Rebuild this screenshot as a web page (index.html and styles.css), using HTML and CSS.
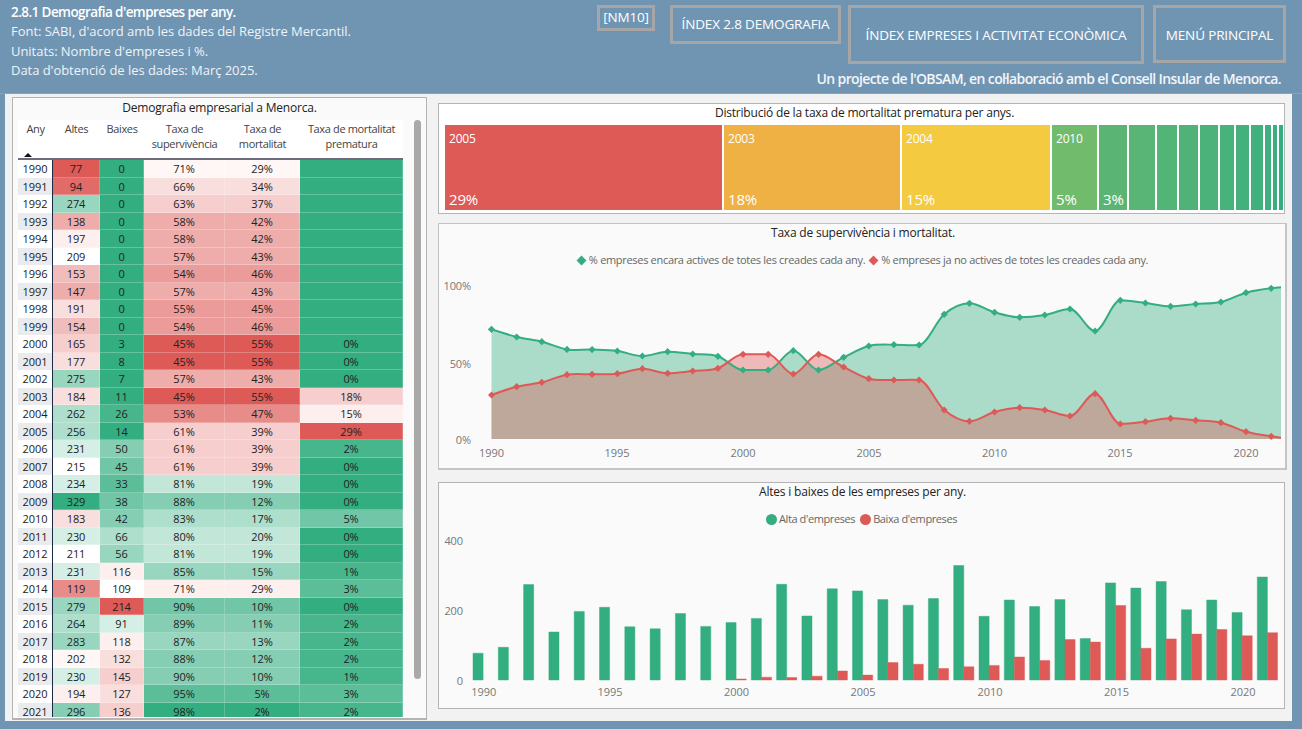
FILE: index.html
```html
<!DOCTYPE html>
<html lang="ca">
<head>
<meta charset="utf-8">
<title>Demografia d'empreses per any</title>
<link rel="stylesheet" href="styles.css">
</head>
<body>
<header class="top">
  <div class="intro">
    <h1 class="intro-title">2.8.1 Demografia d'empreses per any.</h1>
    <p class="intro-line">Font: SABI, d'acord amb les dades del Registre Mercantil.</p>
    <p class="intro-line">Unitats: Nombre d'empreses i %.</p>
    <p class="intro-line">Data d'obtenció de les dades: Març 2025.</p>
  </div>
  <div class="top-right">
    <nav class="nav">
      <a class="btn btn-nm">[NM10]</a>
      <a class="btn btn-index">ÍNDEX 2.8 DEMOGRAFIA</a>
      <a class="btn btn-emp">ÍNDEX EMPRESES I ACTIVITAT ECONÒMICA</a>
      <a class="btn btn-menu">MENÚ PRINCIPAL</a>
    </nav>
    <p class="credit">Un projecte de l'OBSAM, en col·laboració amb el Consell Insular de Menorca.</p>
  </div>
</header>
<main class="main">
  <section class="card card-table">
    <h2 class="table-title">Demografia empresarial a Menorca.</h2>
    <div class="table-wrap">
      <div class="tbl">
        <div class="th th-any">Any<span class="sort"></span></div><div class="th">Altes</div><div class="th">Baixes</div><div class="th">Taxa de<br>supervivència</div><div class="th">Taxa de<br>mortalitat</div><div class="th">Taxa de mortalitat<br>prematura</div>
        <div class="yr">1990</div><div class="c r10">77</div><div class="c g10">0</div><div class="c r0">71%</div><div class="c r0">29%</div><div class="c g10"></div>
        <div class="yr alt">1991</div><div class="c r9">94</div><div class="c g10">0</div><div class="c r2">66%</div><div class="c r2">34%</div><div class="c g10"></div>
        <div class="yr">1992</div><div class="c g5">274</div><div class="c g10">0</div><div class="c r3">63%</div><div class="c r3">37%</div><div class="c g10"></div>
        <div class="yr alt">1993</div><div class="c r5">138</div><div class="c g10">0</div><div class="c r5">58%</div><div class="c r5">42%</div><div class="c g10"></div>
        <div class="yr">1994</div><div class="c r1">197</div><div class="c g10">0</div><div class="c r5">58%</div><div class="c r5">42%</div><div class="c g10"></div>
        <div class="yr alt">1995</div><div class="c w">209</div><div class="c g10">0</div><div class="c r5">57%</div><div class="c r5">43%</div><div class="c g10"></div>
        <div class="yr">1996</div><div class="c r4">153</div><div class="c g10">0</div><div class="c r6">54%</div><div class="c r6">46%</div><div class="c g10"></div>
        <div class="yr alt">1997</div><div class="c r5">147</div><div class="c g10">0</div><div class="c r5">57%</div><div class="c r5">43%</div><div class="c g10"></div>
        <div class="yr">1998</div><div class="c r2">191</div><div class="c g10">0</div><div class="c r6">55%</div><div class="c r6">45%</div><div class="c g10"></div>
        <div class="yr alt">1999</div><div class="c r4">154</div><div class="c g10">0</div><div class="c r6">54%</div><div class="c r6">46%</div><div class="c g10"></div>
        <div class="yr">2000</div><div class="c r3">165</div><div class="c g10">3</div><div class="c r10">45%</div><div class="c r10">55%</div><div class="c g10">0%</div>
        <div class="yr alt">2001</div><div class="c r2">177</div><div class="c g10">8</div><div class="c r10">45%</div><div class="c r10">55%</div><div class="c g10">0%</div>
        <div class="yr">2002</div><div class="c g5">275</div><div class="c g10">7</div><div class="c r5">57%</div><div class="c r5">43%</div><div class="c g10">0%</div>
        <div class="yr alt">2003</div><div class="c r2">184</div><div class="c g10">11</div><div class="c r10">45%</div><div class="c r10">55%</div><div class="c r3">18%</div>
        <div class="yr">2004</div><div class="c g4">262</div><div class="c g9">26</div><div class="c r7">53%</div><div class="c r7">47%</div><div class="c r1">15%</div>
        <div class="yr alt">2005</div><div class="c g4">256</div><div class="c g10">14</div><div class="c r3">61%</div><div class="c r3">39%</div><div class="c r10">29%</div>
        <div class="yr">2006</div><div class="c g2">231</div><div class="c g6">50</div><div class="c r3">61%</div><div class="c r3">39%</div><div class="c g9">2%</div>
        <div class="yr alt">2007</div><div class="c w">215</div><div class="c g7">45</div><div class="c r3">61%</div><div class="c r3">39%</div><div class="c g10">0%</div>
        <div class="yr">2008</div><div class="c g2">234</div><div class="c g8">33</div><div class="c g3">81%</div><div class="c g3">19%</div><div class="c g10">0%</div>
        <div class="yr alt">2009</div><div class="c g10">329</div><div class="c g7">38</div><div class="c g6">88%</div><div class="c g6">12%</div><div class="c g10">0%</div>
        <div class="yr">2010</div><div class="c r2">183</div><div class="c g6">42</div><div class="c g4">83%</div><div class="c g4">17%</div><div class="c g7">5%</div>
        <div class="yr alt">2011</div><div class="c g2">230</div><div class="c g4">66</div><div class="c g3">80%</div><div class="c g3">20%</div><div class="c g10">0%</div>
        <div class="yr">2012</div><div class="c w">211</div><div class="c g5">56</div><div class="c g3">81%</div><div class="c g3">19%</div><div class="c g10">0%</div>
        <div class="yr alt">2013</div><div class="c g2">231</div><div class="c r1">116</div><div class="c g5">85%</div><div class="c g5">15%</div><div class="c g9">1%</div>
        <div class="yr">2014</div><div class="c r7">119</div><div class="c w">109</div><div class="c r1">71%</div><div class="c r1">29%</div><div class="c g8">3%</div>
        <div class="yr alt">2015</div><div class="c g5">279</div><div class="c r10">214</div><div class="c g7">90%</div><div class="c g7">10%</div><div class="c g10">0%</div>
        <div class="yr">2016</div><div class="c g4">264</div><div class="c g2">91</div><div class="c g6">89%</div><div class="c g6">11%</div><div class="c g9">2%</div>
        <div class="yr alt">2017</div><div class="c g5">283</div><div class="c r1">118</div><div class="c g5">87%</div><div class="c g5">13%</div><div class="c g9">2%</div>
        <div class="yr">2018</div><div class="c r0">202</div><div class="c r2">132</div><div class="c g6">88%</div><div class="c g6">12%</div><div class="c g9">2%</div>
        <div class="yr alt">2019</div><div class="c g2">230</div><div class="c r3">145</div><div class="c g6">90%</div><div class="c g6">10%</div><div class="c g9">1%</div>
        <div class="yr">2020</div><div class="c r1">194</div><div class="c r2">127</div><div class="c g8">95%</div><div class="c g8">5%</div><div class="c g8">3%</div>
        <div class="yr alt">2021</div><div class="c g6">296</div><div class="c r3">136</div><div class="c g10">98%</div><div class="c g10">2%</div><div class="c g9">2%</div>
      </div>
      <div class="scroll"></div>
    </div>
  </section>
  <div class="charts">
    <section class="card card-tree">
      <h2 class="chart-title chart-title-tree">Distribució de la taxa de mortalitat prematura per anys.</h2>
      <div class="tree">
        <div class="leaf" style="width:277px;background:#dd5a57"><span class="leaf-y">2005</span><span class="leaf-p">29%</span></div>
        <div class="leaf" style="width:176px;background:#efb044"><span class="leaf-y">2003</span><span class="leaf-p">18%</span></div>
        <div class="leaf" style="width:148px;background:#f4ca41"><span class="leaf-y">2004</span><span class="leaf-p">15%</span></div>
        <div class="leaf" style="width:45px;background:#71bb6c"><span class="leaf-y">2010</span><span class="leaf-p">5%</span></div>
        <div class="leaf" style="width:28px;background:#5ab574"><span class="leaf-y"></span><span class="leaf-p">3%</span></div>
        <div class="leaf" style="width:26px;background:#58b575"></div>
        <div class="leaf" style="width:20px;background:#52b477"></div>
        <div class="leaf" style="width:19px;background:#4fb378"></div>
        <div class="leaf" style="width:18px;background:#4bb27a"></div>
        <div class="leaf" style="width:14px;background:#48b27b"></div>
        <div class="leaf" style="width:13px;background:#44b17c"></div>
        <div class="leaf" style="width:12px;background:#40b07d"></div>
        <div class="leaf" style="width:6px;background:#3cb07e"></div>
        <div class="leaf" style="width:4px;background:#38af7f"></div>
        <div class="leaf" style="width:3px;background:#33ae80"></div>
      </div>
    </section>
    <section class="card card-line">
      <h2 class="chart-title">Taxa de supervivència i mortalitat.</h2>
      <div class="legend legend-line">
        <span class="key"><i class="mark diamond green"></i>% empreses encara actives de totes les creades cada any.</span>
        <span class="key"><i class="mark diamond red"></i>% empreses ja no actives de totes les creades cada any.</span>
      </div>
      <svg class="plot" viewBox="439 270 847 199" width="847" height="199">
        <defs>
          <marker id="mg" markerUnits="userSpaceOnUse" markerWidth="8" markerHeight="8" refX="4" refY="4"><path d="M4 .4 7.6 4 4 7.6 .4 4z" fill="#33ae80"/></marker>
          <marker id="mr" markerUnits="userSpaceOnUse" markerWidth="8" markerHeight="8" refX="4" refY="4"><path d="M4 .4 7.6 4 4 7.6 .4 4z" fill="#dd5a57"/></marker>
        </defs>
        <path class="area-g" d="M491.5 329.3S508.3 334.9 516.7 337S533.4 339.6 541.8 341.7S558.6 348.1 567 349.4S583.7 349.3 592.1 349.6S608.9 349.9 617.3 351S634 356 642.4 356S659.2 351.7 667.6 351.7S684.3 353.2 692.7 354S709.5 353.6 717.9 356.3S734.6 370 743 370S759.8 370 768.2 370S784.9 350.7 793.3 350.7S810.1 370 818.5 370S835.2 361.3 843.6 357.3S860.4 348.1 868.8 346S885.5 344.7 893.9 344.7S910.7 345.5 919.1 345S935.8 321.3 944.2 314.3S961 303.3 969.4 303.3S986.1 310 994.5 312.3S1011.3 317.3 1019.7 317.3S1036.4 316.4 1044.8 315S1061.6 309 1070 309S1086.7 331 1095.1 331S1111.9 300.3 1120.3 300.3S1137 302 1145.4 303S1162.2 306.3 1170.6 306.3S1187.3 304.7 1195.7 304S1212.5 303.9 1220.9 302S1237.6 295 1246 292.7S1262.8 289.2 1271.2 288.3L1281 287.3V439H491.5Z"/>
        <path class="area-r" d="M491.5 395S508.3 388.8 516.7 386.7S533.4 384.3 541.8 382.3S558.6 376 567 374.7S583.7 374.5 592.1 374.3S608.9 374.6 617.3 373.7S634 368.7 642.4 368.7S659.2 373.3 667.6 373.3S684.3 371.8 692.7 371S709.5 371.1 717.9 368.3S734.6 354.3 743 354.3S759.8 354.3 768.2 354.3S784.9 374 793.3 374S810.1 354.3 818.5 354.3S835.2 363 843.6 367S860.4 376.5 868.8 378.7S885.5 379.9 893.9 380S910.7 379.5 919.1 380S935.8 403.1 944.2 410S961 421.3 969.4 421.3S986.1 414.3 994.5 412S1011.3 407.7 1019.7 407.7S1036.4 408.6 1044.8 410S1061.6 416 1070 416S1086.7 393.7 1095.1 393.7S1111.9 424 1120.3 424S1137 422.7 1145.4 421.7S1162.2 418.3 1170.6 418.3S1187.3 419.6 1195.7 420.3S1212.5 420.8 1220.9 422.7S1237.6 429.4 1246 431.7S1262.8 435.4 1271.2 436.3L1281 437.7V439H491.5Z"/>
        <path class="line-g" d="M491.5 329.3S508.3 334.9 516.7 337S533.4 339.6 541.8 341.7S558.6 348.1 567 349.4S583.7 349.3 592.1 349.6S608.9 349.9 617.3 351S634 356 642.4 356S659.2 351.7 667.6 351.7S684.3 353.2 692.7 354S709.5 353.6 717.9 356.3S734.6 370 743 370S759.8 370 768.2 370S784.9 350.7 793.3 350.7S810.1 370 818.5 370S835.2 361.3 843.6 357.3S860.4 348.1 868.8 346S885.5 344.7 893.9 344.7S910.7 345.5 919.1 345S935.8 321.3 944.2 314.3S961 303.3 969.4 303.3S986.1 310 994.5 312.3S1011.3 317.3 1019.7 317.3S1036.4 316.4 1044.8 315S1061.6 309 1070 309S1086.7 331 1095.1 331S1111.9 300.3 1120.3 300.3S1137 302 1145.4 303S1162.2 306.3 1170.6 306.3S1187.3 304.7 1195.7 304S1212.5 303.9 1220.9 302S1237.6 295 1246 292.7S1262.8 289.2 1271.2 288.3L1281 287.3"/>
        <path class="line-r" d="M491.5 395S508.3 388.8 516.7 386.7S533.4 384.3 541.8 382.3S558.6 376 567 374.7S583.7 374.5 592.1 374.3S608.9 374.6 617.3 373.7S634 368.7 642.4 368.7S659.2 373.3 667.6 373.3S684.3 371.8 692.7 371S709.5 371.1 717.9 368.3S734.6 354.3 743 354.3S759.8 354.3 768.2 354.3S784.9 374 793.3 374S810.1 354.3 818.5 354.3S835.2 363 843.6 367S860.4 376.5 868.8 378.7S885.5 379.9 893.9 380S910.7 379.5 919.1 380S935.8 403.1 944.2 410S961 421.3 969.4 421.3S986.1 414.3 994.5 412S1011.3 407.7 1019.7 407.7S1036.4 408.6 1044.8 410S1061.6 416 1070 416S1086.7 393.7 1095.1 393.7S1111.9 424 1120.3 424S1137 422.7 1145.4 421.7S1162.2 418.3 1170.6 418.3S1187.3 419.6 1195.7 420.3S1212.5 420.8 1220.9 422.7S1237.6 429.4 1246 431.7S1262.8 435.4 1271.2 436.3L1281 437.7"/>
        <g class="axis axis-y">
          <text x="471" y="290">100%</text><text x="471" y="367.5">50%</text><text x="471" y="443.5">0%</text>
        </g>
        <g class="axis axis-x">
          <text x="491.5" y="457">1990</text><text x="617" y="457">1995</text><text x="743" y="457">2000</text><text x="869" y="457">2005</text><text x="994.5" y="457">2010</text><text x="1120" y="457">2015</text><text x="1246" y="457">2020</text>
        </g>
      </svg>
    </section>
    <section class="card card-bars">
      <h2 class="chart-title">Altes i baixes de les empreses per any.</h2>
      <div class="legend legend-bars">
        <span class="key"><i class="mark dot green"></i>Alta d'empreses</span>
        <span class="key"><i class="mark dot red"></i>Baixa d'empreses</span>
      </div>
      <svg class="plot" viewBox="439 529 845 179" width="845" height="179">
        <path class="bar-g" d="M473 680V653.2h10.1V680zM498.3 680V647.3h10.1V680zM523.6 680V584.6h10.1V680zM548.9 680V632h10.1V680zM574.2 680V611.4h10.1V680zM599.5 680V607.3h10.1V680zM624.8 680V626.8h10.1V680zM650.1 680V628.8h10.1V680zM675.4 680V613.5h10.1V680zM700.7 680V626.4h10.1V680zM726 680V622.6h10.1V680zM751.3 680V618.4h10.1V680zM776.6 680V584.3h10.1V680zM801.9 680V616h10.1V680zM827.2 680V588.8h10.1V680zM852.5 680V590.9h10.1V680zM877.8 680V599.6h10.1V680zM903.1 680V605.2h10.1V680zM928.4 680V598.6h10.1V680zM953.7 680V565.5h10.1V680zM979 680V616.3h10.1V680zM1004.3 680V600h10.1V680zM1029.6 680V606.6h10.1V680zM1054.9 680V599.6h10.1V680zM1080.2 680V638.6h10.1V680zM1105.5 680V582.9h10.1V680zM1130.8 680V588.1h10.1V680zM1156.1 680V581.5h10.1V680zM1181.4 680V609.7h10.1V680zM1206.7 680V600h10.1V680zM1232 680V612.5h10.1V680zM1257.3 680V577h10.1V680z"/>
        <path class="bar-r" d="M736.1 680V679h10.1V680zM761.4 680V677.2h10.1V680zM786.7 680V677.6h10.1V680zM812 680V676.2h10.1V680zM837.3 680V671h10.1V680zM862.6 680V675.1h10.1V680zM887.9 680V662.6h10.1V680zM913.2 680V664.3h10.1V680zM938.5 680V668.5h10.1V680zM963.8 680V666.8h10.1V680zM989.1 680V665.4h10.1V680zM1014.4 680V657h10.1V680zM1039.7 680V660.5h10.1V680zM1065 680V639.6h10.1V680zM1090.3 680V642.1h10.1V680zM1115.6 680V605.5h10.1V680zM1140.9 680V648.3h10.1V680zM1166.2 680V638.9h10.1V680zM1191.5 680V634.1h10.1V680zM1216.8 680V629.5h10.1V680zM1242.1 680V635.8h10.1V680zM1267.4 680V632.7h10.1V680z"/>
        <g class="axis axis-y">
          <text x="463" y="545">400</text><text x="463" y="615">200</text><text x="463" y="685">0</text>
        </g>
        <g class="axis axis-x">
          <text x="483.7" y="696">1990</text><text x="610" y="696">1995</text><text x="736.5" y="696">2000</text><text x="863" y="696">2005</text><text x="990" y="696">2010</text><text x="1116.5" y="696">2015</text><text x="1243" y="696">2020</text>
        </g>
      </svg>
    </section>
  </div>
</main>
</body>
</html>
```
FILE: styles.css
```css
* { box-sizing: border-box; }
html, body { margin: 0; padding: 0; }
body {
  width: 1302px;
  height: 729px;
  overflow: hidden;
  background: #7095b3;
  font-family: "Open Sans", "Noto Sans", sans-serif;
  color: #222;
}
h1, h2, p { margin: 0; font-weight: 400; }

/* header */
.top {
  display: flex;
  justify-content: space-between;
  height: 94px;
  padding-left: 11px;
  padding-right: 16px;
  border-bottom: 1px solid #7fa6c2;
}
.intro { padding-top: 2px; color: #eef3f7; }
.intro-title { font-size: 13.5px; line-height: 20px; font-weight: 600; letter-spacing: -.58px; color: #fff; }
.intro-line { font-size: 13px; line-height: 19.5px; letter-spacing: -.04px; }
.top-right { width: 689px; padding-top: 5px; }
.nav { display: flex; align-items: flex-start; height: 59px; }
.btn {
  display: flex;
  align-items: center;
  justify-content: center;
  border: 3px solid #a6a6a6;
  color: #fff;
  font-size: 13.5px;
  letter-spacing: -.15px;
  white-space: nowrap;
}
.btn-nm { width: 58px; height: 26px; padding-bottom: 3px; }
.btn-index { width: 171px; height: 39px; margin-left: 15px; padding-bottom: 1px; }
.btn-emp { width: 296px; height: 59px; margin-left: 7px; padding-top: 1px; }
.btn-menu { width: 133px; height: 58px; margin-left: 9px; padding-top: 1px; }
.credit {
  margin-top: 6px;
  padding-right: 5px;
  text-align: right;
  font-size: 14px;
  line-height: 18px;
  font-weight: 600;
  letter-spacing: -.63px;
  color: #f3f6f9;
}

/* body of the page */
.main {
  display: flex;
  gap: 11px;
  width: 1287px;
  height: 627px;
  margin-left: 5px;
  padding: 3px 0 0 7px;
  background: #f2f2f2;
}
.card { border: 1px solid #b4b4b4; background: #fafafa; }

/* table card */
.card-table { width: 415px; height: 623px; border-bottom-width: 2px; }
.table-title { height: 22px; font-size: 12px; line-height: 20px; text-align: center; color: #222; letter-spacing: -.2px; }
.table-wrap { display: flex; align-items: flex-start; padding-left: 5px; }
.tbl {
  display: grid;
  grid-template-columns: 35px 47px 44px 81px 75px 103px;
  grid-template-rows: 40px;
  grid-auto-rows: 17.5px;
  width: 385px;
  height: 597px;
  overflow: hidden;
  font-size: 11px;
  letter-spacing: -.1px;
}
.th {
  position: relative;
  padding-top: 1px;
  background: #fff;
  border-bottom: 2px solid #6c6c7c;
  text-align: center;
  font-size: 11px;
  line-height: 15px;
  letter-spacing: -.35px;
  color: #444;
}
.sort {
  position: absolute;
  left: 6px;
  bottom: 1px;
  border-left: 4px solid transparent;
  border-right: 4px solid transparent;
  border-bottom: 4px solid #111;
}
.yr { background: #fff; border-right: 1px solid #1c2a44; text-align: center; line-height: 18px; color: #222; }
.yr.alt { background: #e9ebee; }
.c {
  text-align: center;
  line-height: 18px;
  color: #222;
  border-right: 1px solid rgba(255, 255, 255, .2);
  border-bottom: 1px solid rgba(255, 255, 255, .25);
}
.w { background: #fff; }
.r0 { background: #fff7f6; }
.r1 { background: #fcefee; }
.r2 { background: #f8dedd; }
.r3 { background: #f5cecd; }
.r4 { background: #f1bdbc; }
.r5 { background: #eeadab; }
.r6 { background: #eb9c9a; }
.r7 { background: #e78c89; }
.r9 { background: #e06b68; }
.r10 { background: #dd5a57; }
.g2 { background: #d6efe6; }
.g3 { background: #c2e7d9; }
.g4 { background: #addfcc; }
.g5 { background: #99d6bf; }
.g6 { background: #85ceb3; }
.g7 { background: #70c6a6; }
.g8 { background: #5cbe99; }
.g9 { background: #47b68d; }
.g10 { background: #33ae80; }
.scroll { width: 7px; height: 559px; margin-left: 11px; border-radius: 4px; background: #a9a9a7; }

/* charts column */
.charts { padding-top: 6px; }
.chart-title { height: 18px; padding-left: 2px; font-size: 12px; line-height: 18px; text-align: center; color: #222; letter-spacing: -.2px; }
.chart-title-tree { padding-left: 6px; }
.card-tree { width: 847px; height: 111px; margin-bottom: 9px; background: #fff; }
.tree { display: flex; gap: 2px; height: 85px; margin: 3px 0 0 6px; }
.leaf {
  display: flex;
  flex-direction: column;
  justify-content: space-between;
  flex: none;
  padding: 6px 0 1px 4px;
  color: #fff;
  overflow: hidden;
}
.leaf-y { font-size: 12px; line-height: 16px; letter-spacing: -.2px; height: 16px; }
.leaf-p { font-size: 15px; line-height: 20px; letter-spacing: -.2px; }
.card-line { width: 849px; height: 247px; margin-bottom: 12px; border-width: 1px 2px 2px 1px; border-color: #c4c4c4; }
.card-bars { width: 847px; height: 227px; }
.legend {
  display: flex;
  justify-content: center;
  align-items: center;
  font-size: 11px;
  line-height: 20px;
  color: #666;
}
.legend-line { gap: 3px; height: 20px; margin-top: 8px; letter-spacing: -.31px; }
.legend-bars { gap: 5px; height: 20px; margin-top: 8px; letter-spacing: -.4px; }
.key { display: flex; align-items: center; gap: 2px; white-space: nowrap; }
.mark { display: block; flex: none; }
.diamond { width: 7px; height: 7px; margin: 0 2px; transform: rotate(45deg); }
.dot { width: 11px; height: 11px; border-radius: 50%; }
.green { background: #33ae80; }
.red { background: #dd5a57; }
.plot { display: block; }
.area-g { fill: #33ae80; fill-opacity: .4; }
.area-r { fill: #dd5a57; fill-opacity: .4; }
.line-g, .line-r { fill: none; stroke-width: 2; }
.line-g { stroke: #33ae80; marker-start: url(#mg); marker-mid: url(#mg); }
.line-r { stroke: #dd5a57; marker-start: url(#mr); marker-mid: url(#mr); }
.bar-g { fill: #33ae80; stroke: #33ae80; stroke-opacity: .45; }
.bar-r { fill: #dd5a57; stroke: #dd5a57; stroke-opacity: .45; }
.axis { font-size: 11px; fill: #777; letter-spacing: -.1px; }
.axis-y { text-anchor: end; }
.axis-x { text-anchor: middle; }
```
